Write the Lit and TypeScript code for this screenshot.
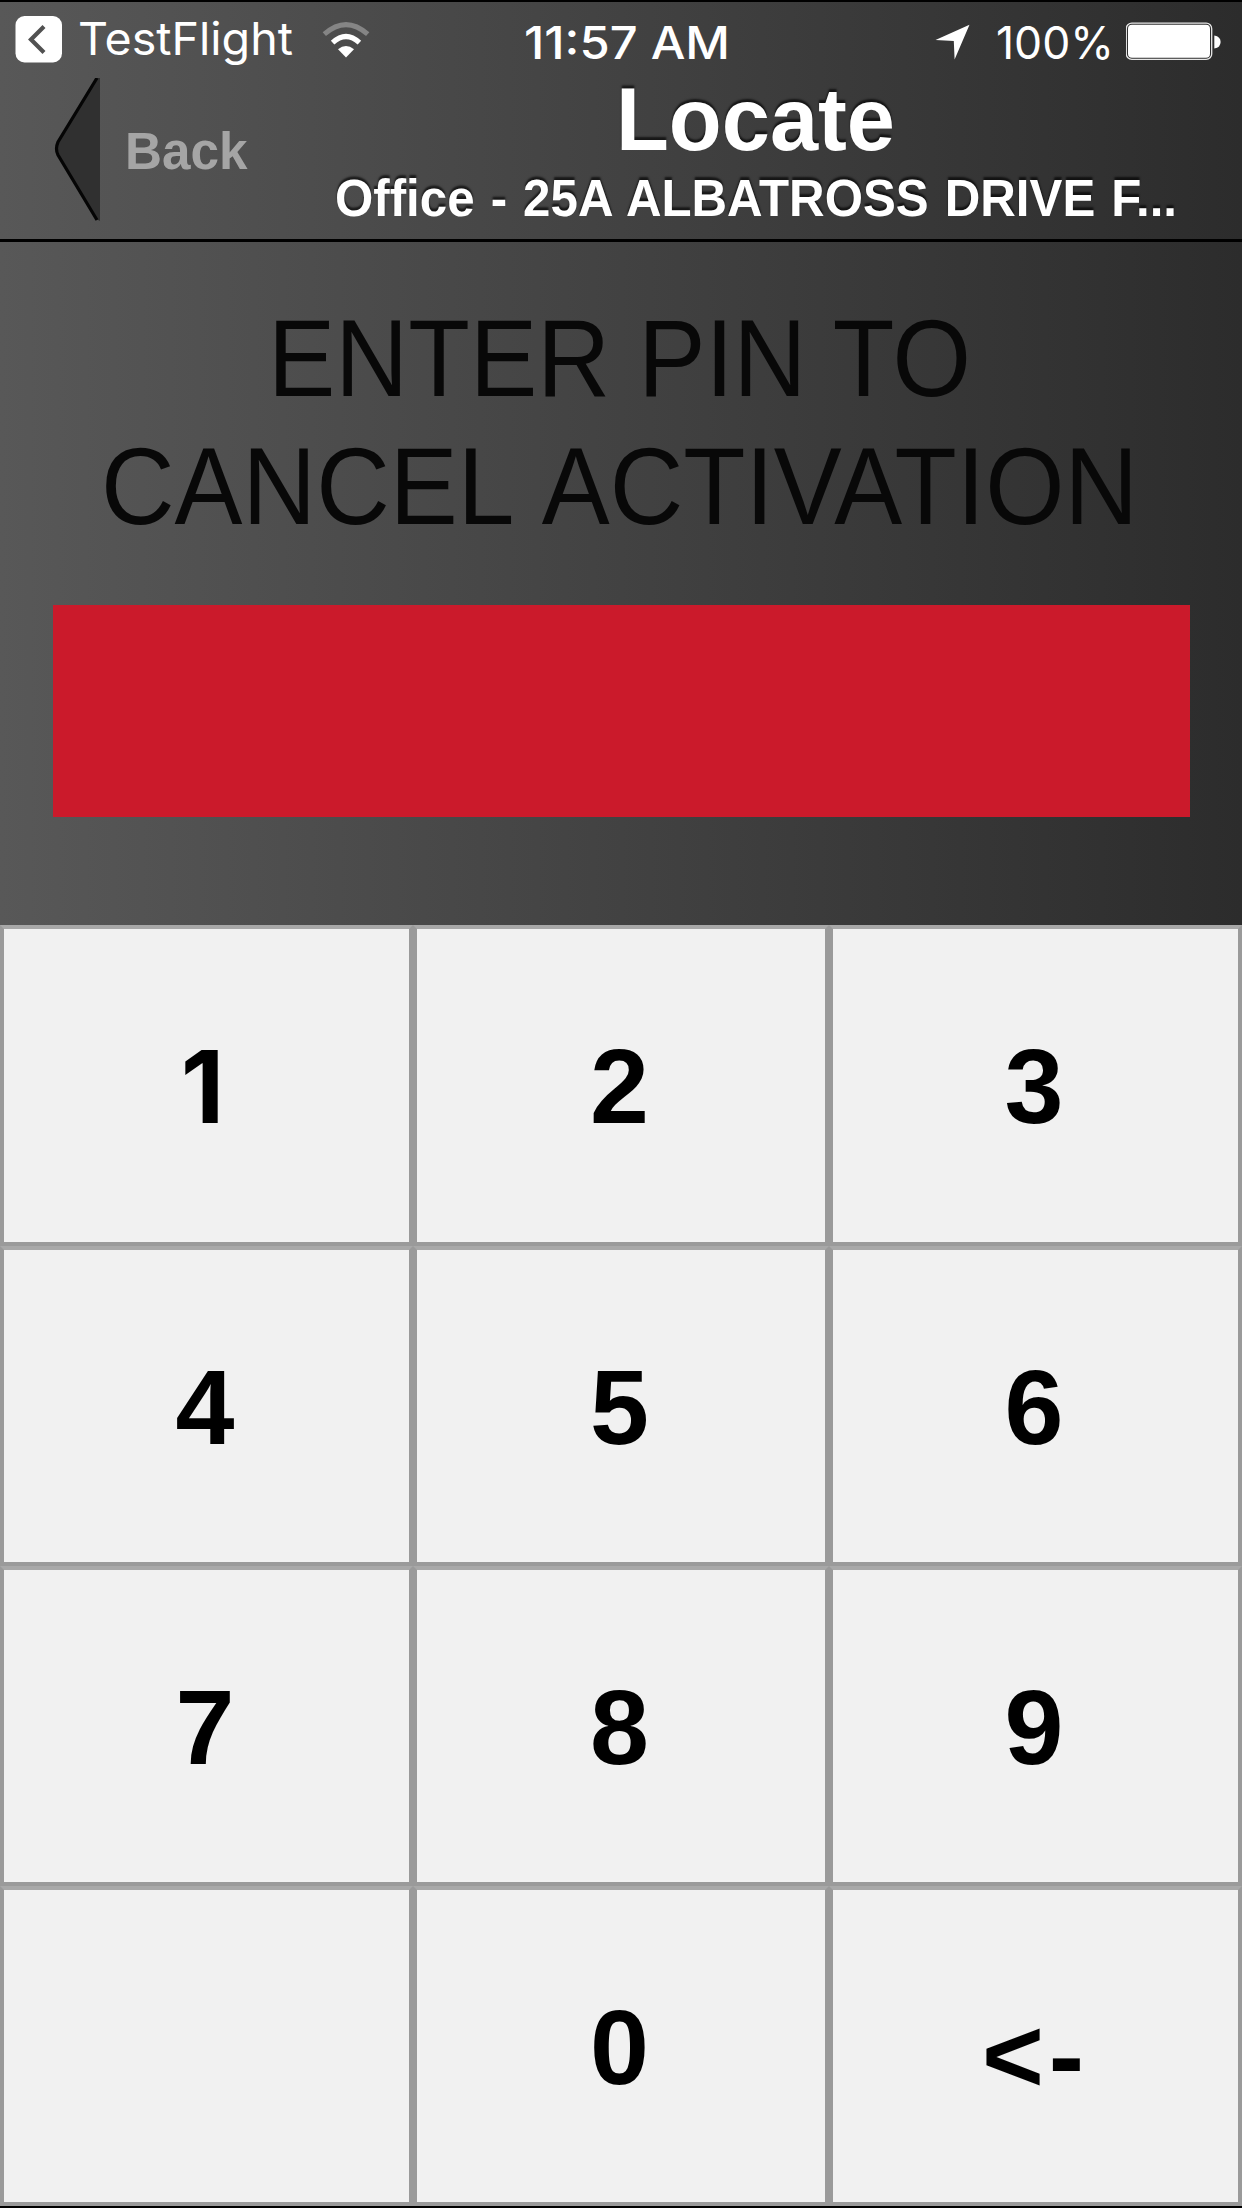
import { LitElement, html, css, svg } from "lit";
import { customElement, property, state } from "lit/decorators.js";

/** One line of text, fitted to an exact advance width. */
@customElement("fit-label")
class FitLabel extends LitElement {
  @property() text = "";
  @property({ type: Number }) width = 100;
  @property({ type: Number }) height = 60;
  @property({ type: Number }) baseline = 50;

  static styles = css`
    :host { display: block; }
    .line { display: block; overflow: visible; }
    .glyphs { fill: currentColor; }
  `;

  render() {
    return html`<svg class="line" width=${this.width} height=${this.height}>
      ${svg`<text class="glyphs" x="0" y=${this.baseline} textLength=${this.width} lengthAdjust="spacingAndGlyphs">${this.text}</text>`}
    </svg>`;
  }
}

@customElement("status-bar")
class StatusBar extends LitElement {
  static styles = css`
    :host { display: block; height: 76px; color: #fff; font-family: Inter, Roboto, sans-serif; font-size: 45.5px; }
    .bar { display: grid; grid-template-columns: 524px 472px 1fr; height: 76px; }
    .left, .mid, .right { display: flex; align-items: flex-start; }
    .left { padding-left: 15px; }
    .mid { justify-content: space-between; }
    .time { font-weight: 500; }
    .app { margin-left: 15px; }
    .wifi { margin-left: 28px; }
    .icon { display: block; flex: none; }
    .arrow { margin-right: 25px; }
    .battery { margin-left: 12px; }
  `;

  render() {
    return html`<div class="bar">
      <div class="left">
        <svg class="icon" width="48" height="74" viewBox="15 2 48 74">
          <rect x="15.5" y="16" width="46.5" height="46.5" rx="9" fill="#fff" />
          <path d="M44 26.5 L31 39.5 L44 52.5" fill="none" stroke="#515151" stroke-width="4.2" />
        </svg>
        <fit-label class="app" text="TestFlight" width="215" height="74" baseline="53.3"></fit-label>
        <svg class="icon wifi" width="50" height="74" viewBox="321 2 50 74">
          <path d="M324.3 34.2 Q346 15 367.7 34.2" fill="none" stroke="#858585" stroke-width="5" />
          <path d="M332.6 42.6 Q346 30.2 359.4 42.6" fill="none" stroke="#fff" stroke-width="5.2" />
          <path d="M338 49.3 Q346 42.6 354 49.3 L346 57.5 Z" fill="#fff" />
        </svg>
      </div>
      <div class="mid">
        <fit-label class="time" text="11:57 AM" width="206" height="74" baseline="57"></fit-label>
        <svg class="icon arrow" width="36" height="74" viewBox="936 2 36 74">
          <path d="M970.5 24.8 L955.6 59.5 L954.8 41 L936.5 40 Z" fill="#fff" />
        </svg>
      </div>
      <div class="right">
        <fit-label text="100%" width="118" height="74" baseline="57"></fit-label>
        <svg class="icon battery" width="97" height="74" viewBox="1126 2 97 74">
          <rect x="1126.3" y="23.2" width="85.4" height="36.2" rx="5.5" fill="none" stroke="#e8e8e8" stroke-width="1.3" />
          <rect x="1128" y="24.8" width="82" height="33" rx="4" fill="#fff" />
          <path d="M1214.3 35.5 Q1220.6 36.5 1220.6 42 Q1220.6 47.500 1214.3 48.5 Z" fill="#fff" />
        </svg>
      </div>
    </div>`;
  }
}

@customElement("nav-header")
class NavHeader extends LitElement {
  static styles = css`
    :host { display: block; height: 160px; font-family: "Liberation Sans", Arial, sans-serif; font-weight: 700; }
    .row { display: grid; grid-template-columns: 270px 972px; height: 160px; }
    .back { display: flex; align-items: flex-start; padding-left: 54px; color: #a5a5a5; font-size: 51px; }
    .chev { display: block; flex: none; margin-right: 23px; }
    .titles { display: flex; flex-direction: column; align-items: center; color: #fff; }
    .title { margin-right: 1px; font-size: 89px; text-shadow: 0 -3px 2px rgba(0, 0, 0, 0.65); }
    .sub { font-size: 51.5px; word-spacing: 2.5px; text-shadow: 0 -3px 2px rgba(0, 0, 0, 0.65); }
  `;

  render() {
    return html`<div class="row">
      <div class="back">
        <svg class="chev" width="48" height="150" viewBox="54 78 48 150">
          <path d="M100 76 L96 79 L57.500 143 Q55.500 149 57.500 155 L96 219 L100 221 Z" fill="#303030" />
          <path d="M97 78 L58 142 Q55 149 58 155 L97 220" fill="none" stroke="#050505" stroke-width="3.2" />
        </svg>
        <fit-label text="Back" width="122.500" height="150" baseline="90.5"></fit-label>
      </div>
      <div class="titles">
        <fit-label class="title" text="Locate" width="279" height="82" baseline="71.5"></fit-label>
        <fit-label class="sub" text="Office - 25A ALBATROSS DRIVE F..." width="842" height="75" baseline="55.6"></fit-label>
      </div>
    </div>`;
  }
}

@customElement("key-pad")
class KeyPad extends LitElement {
  private keys = ["1", "2", "3", "4", "5", "6", "7", "8", "9", "", "0", "<-"];

  static styles = css`
    :host { display: block; height: 1281px; }
    .pad { display: grid; grid-template-columns: 413px 416px 413px; grid-template-rows: 321px 320px 320px 320px; }
    .key {
      box-sizing: border-box; display: flex; align-items: center; justify-content: center;
      margin: 0; padding: 1px 3px 0 0; border: 4px solid #9a9a9a; border-top-color: #a8a8a8; border-radius: 0;
      background: #f1f1f1; color: #000;
      font: 700 106px/120px "Liberation Sans", Arial, sans-serif;
    }
    .one { padding-right: 8px; font-family: Inter, sans-serif; font-size: 101px; }
    .erase { padding-top: 18px; padding-right: 0; letter-spacing: 5px; }
  `;

  private press(key: string) {
    this.dispatchEvent(new CustomEvent("key", { detail: key }));
  }

  private keyClass(key: string) {
    return key === "1" ? "key one" : key === "<-" ? "key erase" : "key";
  }

  render() {
    return html`<div class="pad">
      ${this.keys.map((k) => html`<button class=${this.keyClass(k)} @click=${() => this.press(k)}>${k}</button>`)}
    </div>`;
  }
}

@customElement("app-root")
class AppRoot extends LitElement {
  @state() private pin = "";

  static styles = css`
    :host { display: block; width: 1242px; height: 2208px; overflow: hidden; }
    .screen {
      box-sizing: border-box; display: flex; flex-direction: column; height: 2208px;
      border-top: 2px solid #000; border-bottom: 2px solid #000;
      background: linear-gradient(to right, #585858, #2c2c2c);
      font-family: "Liberation Sans", Arial, sans-serif;
    }
    .head { display: flex; flex-direction: column; height: 237px; border-bottom: 3px solid #000; }
    .body { display: flex; flex-direction: column; align-items: center; height: 683px; padding-top: 52px; box-sizing: border-box; }
    .prompt { margin-right: 3px; color: #080808; font-size: 109px; -webkit-text-stroke: 0.6px #080808; }
    .wide { word-spacing: 9px; }
    .pin {
      box-sizing: border-box; width: 1137px; height: 212px; margin-top: 55px; background: #cb1a2b; color: #fff;
      font-size: 109px; line-height: 212px; text-align: center;
    }
  `;

  private onKey(e: CustomEvent<string>) {
    this.pin = e.detail === "<-" ? this.pin.slice(0, -1) : (this.pin + e.detail).slice(0, 4);
  }

  render() {
    return html`<div class="screen">
      <div class="head">
        <status-bar></status-bar>
        <nav-header></nav-header>
      </div>
      <div class="body">
        <fit-label class="prompt" text="ENTER PIN TO" width="703" height="128" baseline="101.7"></fit-label>
        <fit-label class="prompt wide" text="CANCEL ACTIVATION" width="1037" height="128" baseline="101.7"></fit-label>
        <div class="pin">${this.pin.replace(/./g, "•")}</div>
      </div>
      <key-pad @key=${this.onKey}></key-pad>
    </div>`;
  }
}
